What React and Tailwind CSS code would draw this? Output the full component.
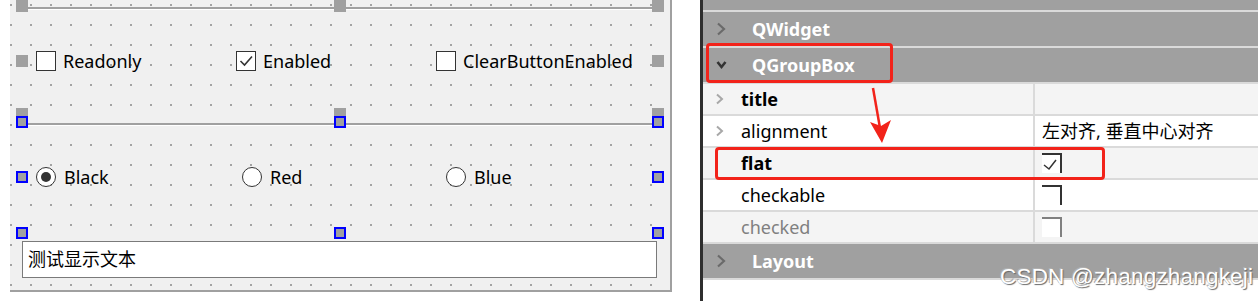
import React from 'react';

const FONT = "font-['Noto_Sans','Noto_Sans_CJK_SC',sans-serif]";

// Qt Designer 选中控件时的小方块
const Handle = ({ x, y, blue }) => (
  <div
    className={
      'absolute h-[12px] w-[12px] ' +
      (blue ? 'border-2 border-[#0000ff] bg-[#a0a0a0]' : 'bg-[#a0a0a0]')
    }
    style={{ left: x, top: y }}
  />
);

const HLine = () => (
  <div className="mx-[6px]">
    <div className="h-[2px] bg-[#a0a0a0]" />
    <div className="h-[1px] bg-white" />
  </div>
);

const CheckBox = ({ label, checked }) => (
  <div className="flex items-center gap-[7px]">
    <div className="relative h-[20px] w-[20px] border border-[#333] bg-white">
      {checked && (
        <svg className="absolute left-0 top-0" width="18" height="18" viewBox="0 0 18 18">
          <path d="M3.5 9 L7.5 13 L15 4.5" fill="none" stroke="#333" strokeWidth="1.6" />
        </svg>
      )}
    </div>
    <span className="text-[18px] leading-none text-black">{label}</span>
  </div>
);

const Radio = ({ label, checked }) => (
  <div className="flex items-center gap-[8px]">
    <div className="flex h-[20px] w-[20px] items-center justify-center rounded-full border border-[#333] bg-white">
      {checked && <div className="h-[10px] w-[10px] rounded-full bg-[#333]" />}
    </div>
    <span className="text-[18px] leading-none text-black">{label}</span>
  </div>
);

const Chevron = ({ color, down, big }) => (
  <svg width="11" height="14" viewBox="0 0 11 14" className="shrink-0">
    {down ? (
      <path d="M1.5 4 L5.5 9 L9.5 4" fill="none" stroke={color} strokeWidth="2.6" />
    ) : big ? (
      <path d="M2 1.5 L8 7 L2 12.5" fill="none" stroke={color} strokeWidth="2.2" />
    ) : (
      <path d="M2 2.5 L7 7 L2 11.5" fill="none" stroke={color} strokeWidth="2" />
    )}
  </svg>
);

const GroupHeader = ({ label, down, h = 'h-[34px]' }) => (
  <>
    <div className={'flex items-center bg-[#a0a0a0] pl-[13px] ' + h}>
      {label !== undefined && (
        <>
          <Chevron color={down ? '#333' : '#6a6a6a'} down={down} big />
          <span className="ml-[25px] text-[18px] font-bold text-white">{label}</span>
        </>
      )}
    </div>
    <div className="h-[2px] bg-[#dadada]" />
  </>
);

// 复选框在属性编辑器中只画出上边和右边
const ValueBox = ({ checked, muted }) => (
  <div
    className={
      'relative h-[20px] w-[20px] border-r-2 border-t-2 ' +
      (muted ? 'border-[#808080] bg-white' : 'border-[#333] bg-white')
    }
  >
    {checked && (
      <svg className="absolute left-0 top-0" width="18" height="18" viewBox="0 0 18 18">
        <path d="M2 10 L7 14 L14 5" fill="none" stroke="#333" strokeWidth="1.5" />
      </svg>
    )}
  </div>
);

const PropRow = ({ name, bold, muted, arrow, shaded, value }) => (
  <>
    <div className={'flex h-[30px] ' + (shaded ? 'bg-[#f4f4f4]' : 'bg-white')}>
      <div className="flex w-[330px] items-center pl-[12px]">
        <div className="w-[11px]">{arrow && <Chevron color="#a8a8a8" />}</div>
        <span
          className={
            'ml-[15px] text-[18px] ' +
            (bold ? 'font-bold text-black' : muted ? 'text-[#808080]' : 'text-black')
          }
        >
          {name}
        </span>
      </div>
      <div className="w-[2px] bg-[#dadada]" />
      <div className="flex flex-1 items-center pl-[7px] text-[18px] text-black">{value}</div>
    </div>
    <div className="h-[2px] bg-[#dadada]" />
  </>
);

export default function App() {
  return (
    <div className={'relative flex h-[301px] w-[1258px] overflow-hidden bg-white ' + FONT}>
      {/* 设计器画布 */}
      <div className="ml-[10px] h-[292px] w-[662px] border-b-2 border-r-2 border-[#a0a0a0] bg-[#f0f0f0] bg-[radial-gradient(circle_at_1px_1px,#a3a3a3_1px,transparent_1.4px)] bg-[length:20px_20px] bg-[position:0px_4px]">
        <div className="relative h-[12px] pt-[7px]">
          <HLine />
          <Handle x={6} y={0} />
          <Handle x={324} y={0} />
          <Handle x={642} y={0} />
        </div>

        <div className="relative mt-[39px] h-[20px]">
          <div className="grid grid-cols-[200px_200px_1fr] pl-[26px]">
            <CheckBox label="Readonly" />
            <CheckBox label="Enabled" checked />
            <CheckBox label="ClearButtonEnabled" />
          </div>
          <Handle x={6} y={4} />
          <Handle x={642} y={4} />
        </div>

        <div className="relative mt-[37px] h-[21px] pt-[15px]">
          <HLine />
          <Handle x={6} y={0} />
          <Handle x={324} y={0} />
          <Handle x={642} y={0} />
          <Handle x={6} y={8} blue />
          <Handle x={324} y={8} blue />
          <Handle x={642} y={8} blue />
        </div>

        <div className="relative mt-[38px] h-[20px]">
          <div className="grid grid-cols-[206px_204px_1fr] pl-[26px]">
            <Radio label="Black" checked />
            <Radio label="Red" />
            <Radio label="Blue" />
          </div>
          <Handle x={6} y={4} blue />
          <Handle x={642} y={4} blue />
        </div>

        <div className="relative mt-[40px] h-[14px]">
          <Handle x={6} y={0} blue />
          <Handle x={324} y={0} blue />
          <Handle x={642} y={0} blue />
        </div>

        <div className="ml-[12px] flex h-[37px] w-[635px] items-center border border-[#7a7a7a] bg-white pl-[5px] text-[18px] text-black">
          测试显示文本
        </div>
      </div>

      <div className="ml-[28px] w-[3px] bg-[#2e2e2e]" />

      {/* 属性编辑器 */}
      <div className="flex flex-1 flex-col">
        <GroupHeader h="h-[10px]" />
        <GroupHeader label="QWidget" />
        <GroupHeader label="QGroupBox" down />
        <PropRow name="title" bold arrow shaded />
        <PropRow name="alignment" arrow value="左对齐, 垂直中心对齐" />
        <PropRow name="flat" bold shaded value={<ValueBox checked />} />
        <PropRow name="checkable" value={<ValueBox />} />
        <PropRow name="checked" muted shaded value={<ValueBox muted />} />
        <GroupHeader label="Layout" />
      </div>

      {/* 红色标注 */}
      <div className="absolute left-[706px] top-[43px] h-[40px] w-[187px] rounded-[4px] border-[3px] border-[#f2231a]" />
      <div className="absolute left-[715px] top-[147px] h-[33px] w-[390px] rounded-[4px] border-[3px] border-[#f2231a]" />
      <svg className="absolute left-[862px] top-[86px]" width="36" height="60" viewBox="0 0 36 60">
        <path d="M11 2 L18 42" stroke="#f2231a" strokeWidth="2.5" />
        <path d="M8 36 L20 57 L29 34 L19 40 Z" fill="#f2231a" />
      </svg>

      <div className="absolute left-[1000px] top-[266px] text-[22.5px] leading-none tracking-[0.2px] text-white [text-shadow:1px_1px_1px_#6a6a6a,-1px_-1px_0_#b0b0b0] font-['Liberation_Sans',sans-serif]">
        CSDN @zhangzhangkeji
      </div>
    </div>
  );
}
